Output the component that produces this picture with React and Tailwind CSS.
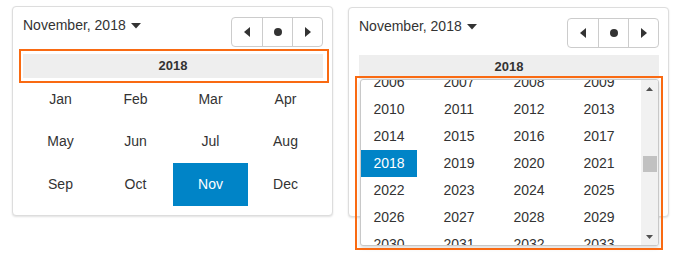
import React from "react";

const MONTHS = ["Jan", "Feb", "Mar", "Apr", "May", "Jun", "Jul", "Aug", "Sep", "Oct", "Nov", "Dec"];

const YEARS = [];
for (let y = 2006; y <= 2033; y++) YEARS.push(y);

const Caret = () => (
  <svg width="10" height="6" viewBox="0 0 10 6" className="ml-[5px] mt-[1px]">
    <polygon points="0,0 10,0 5,5.5" fill="#333" />
  </svg>
);

const NavButtons = () => (
  <div className="mt-[2px] flex h-[30px] w-[92px] rounded-[4px] border border-[#ccc] bg-white">
    <div className="flex w-[30px] items-center justify-center">
      <svg width="6" height="10" viewBox="0 0 6 10">
        <polygon points="6,0 6,10 0,5" fill="#333" />
      </svg>
    </div>
    <div className="flex w-[30px] items-center justify-center border-l border-[#ccc]">
      <div className="h-[8px] w-[8px] rounded-full bg-[#333]" />
    </div>
    <div className="flex w-[30px] items-center justify-center border-l border-[#ccc]">
      <svg width="6" height="10" viewBox="0 0 6 10">
        <polygon points="0,0 6,5 0,10" fill="#333" />
      </svg>
    </div>
  </div>
);

const Header = () => (
  <>
    <div className="flex h-[39px] items-start justify-between">
      <div className="flex items-center text-[14px] leading-[20px]">
        November, 2018
        <Caret />
      </div>
      <NavButtons />
    </div>
    <div className="flex h-[24px] items-center justify-center bg-[#eee] text-[13px] font-bold">
      2018
    </div>
  </>
);

const Card = ({ children, className = "" }) => (
  <div
    className={
      "relative w-[321px] rounded-[4px] border border-[#ddd] bg-white pb-[9px] pl-[10px] pr-[9px] pt-[8px] shadow-[0_1px_2px_rgba(0,0,0,0.12)] " +
      className
    }
  >
    {children}
  </div>
);

export default function App() {
  return (
    <div className="min-h-screen bg-white font-['Liberation_Sans',Arial,sans-serif] text-[#333]">
      <div className="flex items-start gap-[15px] pl-[12px] pt-[6px]">
        {/* Month view */}
        <Card>
          <Header />
          <div className="grid h-[128px] grid-cols-4 grid-rows-3">
            {MONTHS.map((m) => (
              <div
                key={m}
                className={
                  m === "Nov"
                    ? "flex items-center justify-center bg-[#0084c7] text-[14px] text-white"
                    : "flex items-center justify-center text-[14px]"
                }
              >
                {m}
              </div>
            ))}
          </div>
          <div className="pointer-events-none absolute left-[6px] top-[42px] h-[34px] w-[310px] border-2 border-[#f96a12]" />
        </Card>

        {/* Year dropdown */}
        <Card className="mt-[1px]">
          <Header />
          <div className="h-[128px]" />

          <div className="absolute left-[11px] top-[71px] flex h-[167px] w-[299px] overflow-hidden rounded-[3px] border border-[#c8c8c8] bg-white shadow-[0_2px_4px_rgba(0,0,0,0.15)]">
            <div className="flex-1 overflow-hidden">
              <div className="-mt-[11px] grid grid-cols-4">
                {YEARS.map((y) => (
                  <div key={y} className="h-[27px]">
                    <div
                      className={
                        y === 2018
                          ? "flex h-[27px] w-[56px] items-center justify-center bg-[#0084c7] text-[14px] text-white"
                          : "flex h-[27px] w-[56px] items-center justify-center text-[14px]"
                      }
                    >
                      {y}
                    </div>
                  </div>
                ))}
              </div>
            </div>
            {/* scrollbar */}
            <div className="flex w-[17px] flex-col bg-[#f1f1f1]">
              <div className="flex h-[17px] items-center justify-center">
                <svg width="7" height="4" viewBox="0 0 7 4">
                  <polygon points="0,4 7,4 3.5,0" fill="#505050" />
                </svg>
              </div>
              <div className="flex-1">
                <div className="ml-[2px] mt-[59px] h-[16px] w-[14px] bg-[#c1c1c1]" />
              </div>
              <div className="flex h-[17px] items-center justify-center">
                <svg width="7" height="4" viewBox="0 0 7 4">
                  <polygon points="0,0 7,0 3.5,4" fill="#505050" />
                </svg>
              </div>
            </div>
          </div>

          <div className="pointer-events-none absolute left-[6px] top-[68px] h-[174px] w-[308px] border-2 border-[#f96a12]" />
        </Card>
      </div>
    </div>
  );
}
